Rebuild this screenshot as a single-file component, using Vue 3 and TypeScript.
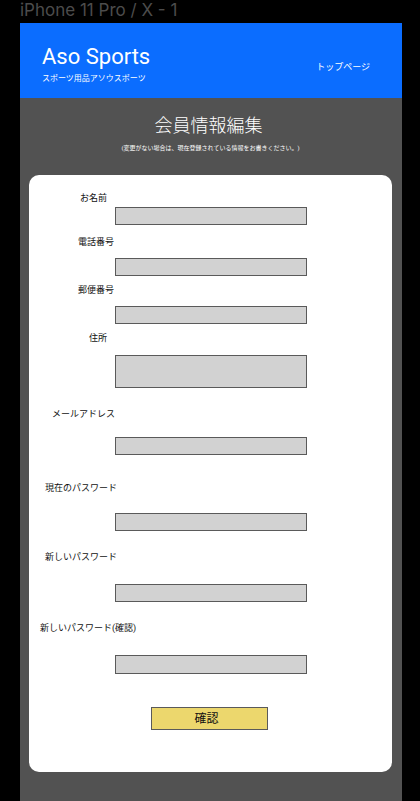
<script setup lang="ts">
import { reactive } from 'vue'

interface Field {
  id: string
  label: string
  type: 'text' | 'tel' | 'email' | 'password' | 'area'
}

const fields: Field[] = [
  { id: 'name', label: 'お名前', type: 'text' },
  { id: 'phone', label: '電話番号', type: 'tel' },
  { id: 'postal', label: '郵便番号', type: 'text' },
  { id: 'address', label: '住所', type: 'area' },
  { id: 'email', label: 'メールアドレス', type: 'email' },
  { id: 'current', label: '現在のパスワード', type: 'password' },
  { id: 'renewed', label: '新しいパスワード', type: 'password' },
  { id: 'confirm', label: '新しいパスワード(確認)', type: 'password' },
]

const values = reactive<Record<string, string>>(
  Object.fromEntries(fields.map((f) => [f.id, ''])),
)
</script>

<template>
  <div class="canvas">
    <div class="frame-name">iPhone 11 Pro / X - 1</div>
    <div class="screen">
      <header class="header">
        <div>
          <div class="brand">Aso Sports</div>
          <div class="tagline">スポーツ用品アソウスポーツ</div>
        </div>
        <nav><a class="top-link" href="#">トップページ</a></nav>
      </header>
      <main class="main">
        <h1 class="title">会員情報編集</h1>
        <p class="note">(変更がない場合は、現在登録されている情報をお書きください。)</p>
        <form class="card" @submit.prevent>
          <div v-for="f in fields" :key="f.id" class="field" :class="f.id">
            <label class="label" :for="f.id">{{ f.label }}</label>
            <textarea v-if="f.type === 'area'" :id="f.id" v-model="values[f.id]" class="control area"></textarea>
            <input v-else :id="f.id" v-model="values[f.id]" class="control" :type="f.type" />
          </div>
          <button class="submit" type="submit">確認</button>
        </form>
      </main>
    </div>
  </div>
</template>

<style>
body {
  background: #000;
}
</style>

<style scoped>
.canvas {
  box-sizing: border-box;
  display: flex;
  flex-direction: column;
  min-height: 100vh;
  padding: 0 18px 0 20px;
  background: #000;
  font-family: Roboto, "Noto Sans CJK JP", sans-serif;
  text-spacing-trim: space-all;
}
.frame-name {
  height: 23px;
  color: #4c4c4c;
  font-family: Inter, sans-serif;
  font-size: 17px;
  line-height: 20px;
  white-space: nowrap;
}
.screen {
  flex: 1;
  background: #525252;
}
.header {
  box-sizing: border-box;
  display: flex;
  justify-content: space-between;
  align-items: center;
  min-height: 75px;
  padding: 8px 32px 0 22px;
  background: #0b6dff;
  color: #fff;
}
.brand {
  font-size: 22px;
  line-height: 26px;
}
.tagline {
  padding-top: 2px;
  font-size: 8px;
  line-height: 14px;
}
.top-link {
  color: #fff;
  font-size: 9px;
  line-height: 14px;
  text-decoration: none;
}
.main {
  padding: 14px 10px 28px 9px;
}
.title {
  margin: 0;
  padding-right: 4px;
  color: #fff;
  font-size: 18px;
  font-weight: 300;
  line-height: 28px;
  text-align: center;
}
.note {
  margin: 3px 0 22px;
  color: #fff;
  font-size: 6px;
  line-height: 10px;
  text-align: center;
}
.card {
  padding: 16px 2px 42px 0;
  border-radius: 10px;
  background: #fff;
}
.field {
  display: grid;
  grid-template-columns: 86px 1fr 83px;
  row-gap: 9px;
  margin-bottom: 7px;
}
.label {
  grid-column: 1 / 3;
  color: #111;
  font-size: 9px;
  line-height: 14px;
}
.control {
  box-sizing: border-box;
  grid-column: 2;
  width: 100%;
  height: 18px;
  margin: 0;
  padding: 0 4px;
  border: 1px solid #5a5a5a;
  border-radius: 0;
  background: #d2d2d2;
  font: inherit;
  font-size: 9px;
}
.area {
  height: 33px;
  resize: none;
}
.name {
  row-gap: 2px;
  margin-bottom: 10px;
}
.name .label {
  padding-left: 51px;
}
.phone .label,
.postal .label {
  padding-left: 49px;
}
.address .label {
  padding-left: 60px;
}
.email .label {
  padding-left: 23px;
}
.current .label,
.renewed .label {
  padding-left: 16px;
}
.confirm .label {
  padding-left: 11px;
}
.address,
.current,
.renewed {
  margin-bottom: 19px;
}
.address {
  row-gap: 10px;
}
.email {
  row-gap: 16px;
  margin-bottom: 26px;
}
.current {
  row-gap: 18px;
}
.renewed,
.confirm {
  row-gap: 20px;
}
.confirm {
  margin-bottom: 33px;
}
.confirm .control {
  height: 19px;
}
.submit {
  display: block;
  box-sizing: border-box;
  width: 117px;
  height: 23px;
  margin: 0 auto;
  padding: 0 6px 0 0;
  border: 1px solid #5a5a5a;
  border-radius: 0;
  background: #ecd76d;
  color: #111;
  font-family: inherit;
  font-size: 12px;
  line-height: 20px;
}
</style>
